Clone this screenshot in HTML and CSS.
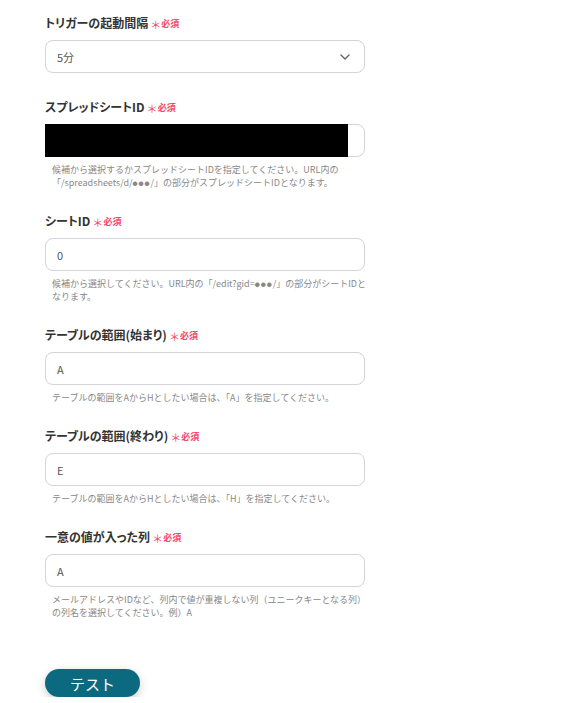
FILE: index.html
```html
<!DOCTYPE html>
<html lang="ja">
<head>
  <meta charset="UTF-8">
  <meta name="viewport" content="width=device-width, initial-scale=1.0">
  <title>トリガー設定</title>
  <link rel="stylesheet" href="styles.css">
</head>
<body>
  <div class="form">
    <div class="field">
      <label class="label">トリガーの起動間隔<span class="req"><span class="star">＊</span><span class="req-text">必須</span></span></label>
      <div class="select">
        <span>5分</span>
        <svg class="chev" width="10" height="6" viewBox="0 0 10 6"><path d="M1 1l4 4 4-4" fill="none" stroke="#666" stroke-width="1.4" stroke-linecap="round" stroke-linejoin="round"/></svg>
      </div>
    </div>

    <div class="field">
      <label class="label">スプレッドシートID<span class="req"><span class="star">＊</span><span class="req-text">必須</span></span></label>
      <div class="input masked"><span class="mask"></span></div>
      <p class="help">候補から選択するかスプレッドシートIDを指定してください。URL内の<br>「/spreadsheets/d/<span class="dots">●●●</span>/」の部分がスプレッドシートIDとなります。</p>
    </div>

    <div class="field">
      <label class="label">シートID<span class="req"><span class="star">＊</span><span class="req-text">必須</span></span></label>
      <div class="input">0</div>
      <p class="help">候補から選択してください。URL内の「/edit?gid=<span class="dots">●●●</span>/」の部分がシートIDと<br>なります。</p>
    </div>

    <div class="field">
      <label class="label">テーブルの範囲(始まり)<span class="req"><span class="star">＊</span><span class="req-text">必須</span></span></label>
      <div class="input">A</div>
      <p class="help">テーブルの範囲をAからHとしたい場合は、「A」を指定してください。</p>
    </div>

    <div class="field">
      <label class="label">テーブルの範囲(終わり)<span class="req"><span class="star">＊</span><span class="req-text">必須</span></span></label>
      <div class="input">E</div>
      <p class="help">テーブルの範囲をAからHとしたい場合は、「H」を指定してください。</p>
    </div>

    <div class="field">
      <label class="label">一意の値が入った列<span class="req"><span class="star">＊</span><span class="req-text">必須</span></span></label>
      <div class="input">A</div>
      <p class="help">メールアドレスやIDなど、列内で値が重複しない列（ユニークキーとなる列）<br>の列名を選択してください。例）A</p>
    </div>

    <button class="test-btn">テスト</button>
  </div>
</body>
</html>
```

FILE: styles.css
```css
body { margin: 0; background: #fff; color: #333; font-family: "Noto Sans CJK JP", "Noto Sans", sans-serif; }
.form { width: 320px; padding: 13px 0 0 45px; display: flex; flex-direction: column; }

.field { display: flex; flex-direction: column; margin-bottom: 24px; }
.label { height: 20px; font-size: 12px; font-weight: bold; line-height: 20px; color: #333; margin-bottom: 7px; display: flex; align-items: center; font-feature-settings: "palt"; }
.req { height: 20px; color: #f5476a; margin-left: 3px; display: flex; align-items: center; }
.req .star { font-size: 11px; line-height: 11px; margin: 3px 1px 0 0; font-weight: normal; }
.req .req-text { font-size: 9px; line-height: 10px; font-weight: bold; margin-top: 2px; }

.select, .input { box-sizing: border-box; height: 33px; border: 1px solid #d2d4d9; border-radius: 8px; padding: 0 11px; display: flex; align-items: center; font-size: 11px; color: #555; }
.select { justify-content: space-between; padding-right: 14px; }
.masked { position: relative; }
.mask { position: absolute; left: -1px; top: -1px; bottom: -1px; width: 303px; background: #000; }

.help { margin: 6px 0 -2px; padding-left: 7px; font-size: 9px; line-height: 13px; color: #888; white-space: nowrap; }
.help .dots { font-size: 5px; letter-spacing: 1px; vertical-align: 1px; }

.test-btn { margin-top: 28px; align-self: flex-start; width: 95px; height: 28px; border: none; border-radius: 14px; background: #0b6a80; color: #fff; font-family: inherit; font-size: 15px; font-weight: normal; box-shadow: 0 3px 10px rgba(0,0,0,0.2); cursor: pointer; }
```
